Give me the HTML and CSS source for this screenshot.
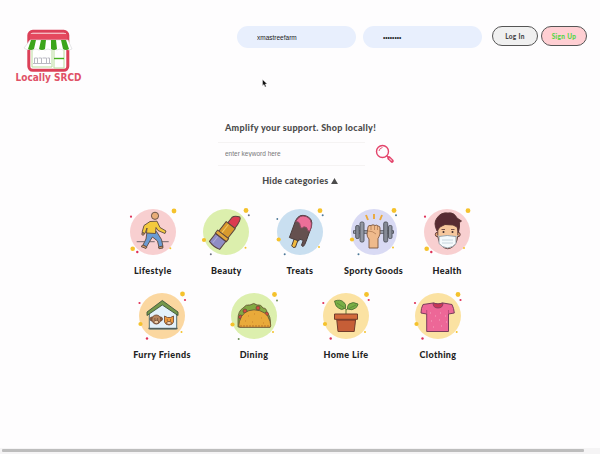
FILE: index.html
```html
<!DOCTYPE html>
<html lang="en">
<head>
<meta charset="utf-8">
<title>Locally SRCD</title>
<link rel="stylesheet" href="styles.css">
</head>
<body>
<header class="header">
  <svg class="logo" viewBox="12 28 74 62" role="img" aria-label="Locally SRCD">
    <rect x="28.8" y="31.3" width="39" height="39" rx="4" fill="#fff" stroke="#dc4058" stroke-width="3"/>
    <path d="M30 34h37v6H30z" fill="#e5485e"/>
    <path d="M31 33.500h35" stroke="#f6b9c0"/>
    <path d="M32 50v17h20V50M54 50v18h10V50" fill="#fff" stroke="#b9db9c"/>
    <path d="M54 58.5h10" stroke="#45b21e" stroke-width="1.4"/>
    <path d="M34.5 63v-5h3v5m1-5h3v5m1-5h4v5m1-5h2v5M33 63.5h18" fill="none" stroke="#b9b9c2"/>
    <path d="M30 40h38l4 9q-3 2-6 0-3 2-6 0-3 2-6 0-3 2-6 0-3 2-6 0-3 2-6 0-3 2-6 0-3 2-6-1z" fill="#fff" stroke="#dddddf" stroke-width=".7"/>
    <path d="M31 40h5l-2 9q-3 2-6 0zM41 40h5l-1 9q-3 2-6 0zM51 40h5l1 9q-3 2-6 0zM61 40h5l3 9q-3 2-6 0z" fill="#3ca51b"/>
    <text class="logo-text" x="15.5" y="80.5" textLength="66" lengthAdjust="spacingAndGlyphs">Locally SRCD</text>
  </svg>
  <form class="login">
    <input class="field" type="text" value="xmastreefarm" aria-label="Username">
    <input class="field" type="password" value="password" aria-label="Password">
    <button class="btn btn-login" type="button">Log In</button>
    <button class="btn btn-signup" type="button">Sign Up</button>
  </form>
</header>
<svg class="pointer" viewBox="0 0 6 9"><path d="M.5.5v6.2l1.5-1.2 1 2.6 1.2-.5L3.2 5h2z" fill="#111" stroke="#fff" stroke-width=".4"/></svg>

<main class="main">
  <section class="search">
    <h1 class="tagline">Amplify your support. Shop locally!</h1>
    <div class="search-row">
      <input class="keyword" type="text" placeholder="enter keyword here">
      <svg class="lens" viewBox="0 0 20 20" fill="none" stroke="#e3446b">
        <circle cx="7.5" cy="7.5" r="6" stroke-width="1.4"/><path d="M4 7q.5-3 3.5-3.5" stroke-width=".9"/>
        <path d="M11.8 11.8l2 2" stroke-width="1.4"/><path d="M14 14l3 3" stroke-width="3.6" stroke-linecap="round"/><path d="M14.3 14.3l2.4 2.4" stroke="#f9bccb" stroke-width="1.2"/>
      </svg>
    </div>
    <p class="toggle">Hide categories <svg class="tri" viewBox="0 0 8 7"><path d="M4 0l4 7H0z" fill="#4c4c4c"/></svg></p>
  </section>

  <section class="row">
    <figure class="cat">
      <svg class="icon" viewBox="0 0 60 60">
        <circle cx="30" cy="30" r="23" fill="#f8cfd0"/>
        <g fill="#f5c22c"><circle cx="51" cy="9" r="2.4"/><circle cx="9.7" cy="46.7" r="2.3"/><circle cx="47.3" cy="46.3" r="1"/></g>
        <g fill="#df3157"><circle cx="8" cy="14.7" r="1.1"/><circle cx="14.3" cy="50" r="1.2"/></g>
        <path d="M13.7 39.7h8m4 0h6m6 0h8" stroke="#77686d"/>
        <g stroke="#5c4a40" stroke-width=".9" stroke-linejoin="round">
          <path d="M24 30l-1 7-3 6 3.5 2 4-7 2-3 5 4 1.5 6.5 4-1-1.5-7-5-8z" fill="#6a9bd3"/>
          <path d="M20 43l4 2-1 1.5-5-2zM35.5 45l4-1 .5 2-4 .7z" fill="#d59c6c"/>
          <path d="M27 19.5l7-.3 3 6.3 6 3.5-1 2.5-7-3-2-3-.5 6-9-.5.5-5-2 5.5-3-1 2-7z" fill="#f3c93d"/>
          <circle cx="32" cy="13.8" r="3.6" fill="#e9ad78"/><circle cx="20" cy="32" r="1.2" fill="#e9ad78"/>
        </g>
      </svg>
      <figcaption class="label">Lifestyle</figcaption>
    </figure>
    <figure class="cat">
      <svg class="icon" viewBox="0 0 60 60">
        <circle cx="30" cy="30" r="23" fill="#dcefad"/>
        <g fill="#f5c22c"><circle cx="50" cy="8.5" r="2.4"/><circle cx="8" cy="38" r="2.1"/><circle cx="49.5" cy="45.7" r="1"/></g>
        <g fill="#6c7180"><circle cx="52.8" cy="13.3" r="1"/><circle cx="14.8" cy="52.3" r="1"/></g>
        <g transform="translate(29 30) rotate(38)" stroke="#59443f" stroke-linejoin="round">
          <path d="M-3.500-9v-7q1-3 6-5 3 1 3 12z" fill="#db3b50"/>
          <path d="M-5.5-9h11.500V4H-5.5z" fill="#d89a2d"/><path d="M-2-8V3" stroke="#f1c963"/>
          <path d="M-7 3H7v4H-7z" fill="#e2a73b"/>
          <path d="M-6.500 7H6.500v10q-6 2-13 0z" fill="#8f8dc4"/><path d="M-3 8v8" stroke="#b0add6"/>
        </g>
      </svg>
      <figcaption class="label">Beauty</figcaption>
    </figure>
    <figure class="cat">
      <svg class="icon" viewBox="0 0 60 60">
        <circle cx="30" cy="30" r="23" fill="#c9dff0"/>
        <g fill="#f5c22c"><circle cx="50" cy="8.7" r="2.4"/><circle cx="8.7" cy="37.5" r="2.1"/><circle cx="49" cy="45" r="1"/></g>
        <g fill="#4c7898"><circle cx="52.7" cy="13.3" r="1"/><circle cx="7.3" cy="17" r=".9"/><circle cx="14.7" cy="52.2" r="1"/></g>
        <g transform="translate(31 27) rotate(20)" stroke="#493c3c" stroke-width=".9">
          <path d="M-3 11h4v8q-2 2-4 0z" fill="#f0b93d"/>
          <path d="M-8 12V-6q1-8 8.500-8T9-6v16q0 8-3 5v-5H2v2z" fill="#65504f"/>
          <path d="M-7.5-5q1-8.500 8-8.500T9-5v4q-2 1-3-1T2-3q-2 4-4 0t-5.500-2z" fill="#ec6f98" stroke="#8b4860"/>
        </g>
      </svg>
      <figcaption class="label">Treats</figcaption>
    </figure>
    <figure class="cat">
      <svg class="icon" viewBox="0 0 60 60">
        <circle cx="30" cy="30" r="23" fill="#d9daf4"/>
        <g fill="#f5c22c"><circle cx="50" cy="8.5" r="2.4"/><circle cx="8" cy="37.5" r="2.1"/><circle cx="49" cy="45.5" r="1"/></g>
        <g fill="#4c7898"><circle cx="52" cy="13.3" r="1"/><circle cx="14.5" cy="52.2" r="1"/></g>
        <path d="M22 13l2 5M30 12v5M38 13l-2 5" stroke="#eba93c" stroke-width="1.900"/>
        <g stroke="#4d5059" stroke-width=".9">
          <path d="M9.500 28.700h40v2.600h-40z" fill="#a8acb8"/>
          <rect x="11.700" y="23.500" width="3.500" height="13" rx="1.300" fill="#858a96"/><rect x="16" y="20" width="4" height="20" rx="1.500" fill="#9297a3"/>
          <rect x="39.700" y="20" width="4" height="20" rx="1.500" fill="#858a96"/><rect x="44.500" y="23.500" width="3.500" height="13" rx="1.300" fill="#9297a3"/>
          <path d="M24 25q0-2 3-1.500 2-1.500 4 0 2-1 3 .5 2 0 2 2v6q-1 3-2 4.500V46h-9V37q-2-2-2-5z" fill="#efba8c" stroke="#79563f"/>
          <path d="M27 24v4M30.500 24v4M33.500 24v4M24 29q5 0 8 3" fill="none" stroke="#a9744d" stroke-width=".7"/>
        </g>
      </svg>
      <figcaption class="label">Sporty Goods</figcaption>
    </figure>
    <figure class="cat">
      <svg class="icon" viewBox="0 0 60 60">
        <circle cx="30" cy="30" r="23" fill="#f8cfd0"/>
        <g fill="#f5c22c"><circle cx="51" cy="8.700" r="2.400"/><circle cx="9.700" cy="46.700" r="2.300"/><circle cx="47" cy="46" r="1"/></g>
        <g fill="#df3157"><circle cx="8" cy="14.700" r="1.100"/><circle cx="14.300" cy="50" r="1.200"/></g>
        <g stroke="#583232" stroke-width=".9">
          <circle cx="20.500" cy="32.500" r="2.200" fill="#e9ab7a"/><circle cx="41" cy="32.500" r="2.200" fill="#e9ab7a"/>
          <path d="M20.800 22h20v12q-1 9-7 12-3 1.500-6 0-6-3-7-12z" fill="#f6c79c"/>
          <path d="M20 29q-4-8 0-13 4-6 11-5 6-1 9 5l4.500 3-2 1.500Q43 25 41.500 30l-1.500-5-4-2-8-.5-5 2.500z" fill="#572b32"/>
          <path d="M22 34.500q8-2 17 0v7q-3 4-8.500 4.500-5.500-.5-8.500-4.500z" fill="#f5fafc" stroke="#8d9ba5"/>
        </g>
        <path d="M20.500 33l2 2.500m18.500-2.500l-2 2.500M25 38h11m-11 3h11" stroke="#bbcbd5" stroke-width=".8"/>
        <path d="M24.500 27.500h3.500m6 0h3.500" stroke="#583232" stroke-width=".8"/><circle cx="26.500" cy="30" r="1" fill="#39292c"/><circle cx="35.500" cy="30" r="1" fill="#39292c"/>
      </svg>
      <figcaption class="label">Health</figcaption>
    </figure>
  </section>

  <section class="row">
    <figure class="cat">
      <svg class="icon" viewBox="0 0 60 60">
        <circle cx="30" cy="30" r="23" fill="#fbd7a0"/>
        <g fill="#f5c22c"><circle cx="50.500" cy="8" r="2.400"/><circle cx="8.500" cy="38" r="2.100"/><circle cx="49.500" cy="46" r="1"/></g>
        <g fill="#df3157"><circle cx="53" cy="14" r="1.100"/><circle cx="7.500" cy="17" r="1.100"/><circle cx="15" cy="52.500" r="1.200"/></g>
        <path d="M17.300 27l13-10 14.400 10v16H17.300z" fill="#e3f1fa" stroke="#536d70"/>
        <path d="M30.300 14.500L46 26v3.500L30.300 19 15 29.500V26z" fill="#75984b" stroke="#3e563c" stroke-width=".9"/>
        <path d="M16.500 42.500h29" stroke="#52605b" stroke-width="1.400"/>
        <g stroke="#694530" stroke-width=".8">
          <circle cx="20" cy="33" r="2" fill="#916044"/><circle cx="28.500" cy="33" r="2" fill="#916044"/><circle cx="24.300" cy="33.500" r="4.500" fill="#b5845d"/><ellipse cx="24.300" cy="36" rx="2.500" ry="1.700" fill="#edcda8"/>
          <path d="M32.500 30l3 1.500h3l3-1.500v6q-1 3-4.500 3t-4.500-3z" fill="#ee9b3e"/><ellipse cx="37" cy="37" rx="2.500" ry="1.500" fill="#f8dec2"/>
        </g>
        <path d="M22.500 33h.8m2 0h.8m8.700 1h.8m2.500 0h.8" stroke="#302620"/>
      </svg>
      <figcaption class="label">Furry Friends</figcaption>
    </figure>
    <figure class="cat">
      <svg class="icon" viewBox="0 0 60 60">
        <circle cx="30" cy="30" r="23" fill="#dcefad"/>
        <g fill="#f5c22c"><circle cx="50.500" cy="8.500" r="2.400"/><circle cx="8.500" cy="38.500" r="2.100"/><circle cx="49" cy="46" r="1"/></g>
        <g fill="#6d8f58"><circle cx="53" cy="14.500" r="1"/><circle cx="14.700" cy="53" r="1"/></g>
        <g stroke="#665033" stroke-width=".8">
          <path d="M14 41V33q0-8 5-11 3-4 7-3 4-3 7 0 4-1 6 3 4 0 4 5 4 2 3.500 14z" fill="#81a943"/>
          <g fill="#d6483f"><circle cx="16.500" cy="31" r="2"/><circle cx="21" cy="25" r="2"/><circle cx="34" cy="22" r="2"/><circle cx="42.500" cy="28" r="2"/></g>
          <path d="M15.500 41.300q-1.500-1 0-6 3-11 14.500-11.500 13 .5 16 11.500 1.500 5 0 6z" fill="#e9aa3a"/>
        </g>
        <path d="M16 40h29" stroke="#bb7126" stroke-dasharray="2 1"/><path d="M24 30h1m5-2h1m6 4h1m-10 4h1m-8-1h1m17 2h1" stroke="#c9812a"/>
      </svg>
      <figcaption class="label">Dining</figcaption>
    </figure>
    <figure class="cat">
      <svg class="icon" viewBox="0 0 60 60">
        <circle cx="30" cy="30" r="23" fill="#fbe2a2"/>
        <g fill="#f5c22c"><circle cx="50.500" cy="8.500" r="2.400"/><circle cx="9" cy="38" r="2.100"/><circle cx="49" cy="46" r="1"/></g>
        <g fill="#df3157"><circle cx="52.700" cy="14" r="1.100"/><circle cx="7.300" cy="17" r="1.100"/><circle cx="14.700" cy="52.500" r="1.200"/></g>
        <path d="M30 28v-5l-4-3m4 4l4-3" fill="none" stroke="#617c35"/>
        <path d="M18.500 15q6-2 9 1 3 2 2 6-4 3-7 0-3-1-4-7zM42 18q-5-3-9 0-2 2-1.500 5 5 2 8-1 2-1 2.500-4z" fill="#78ae45" stroke="#456831" stroke-width=".8"/><path d="M21 17l7 4.500M40 19l-7 3.500" stroke="#4d7934" stroke-width=".6"/>
        <path d="M20.700 33h19l-1.500 12.500H22z" fill="#c65e37" stroke="#713c2c"/><path d="M18.500 28h23v5.300h-23z" fill="#d36a3c" stroke="#713c2c"/><path d="M21 34.500h18" stroke="#98442c"/>
      </svg>
      <figcaption class="label">Home Life</figcaption>
    </figure>
    <figure class="cat">
      <svg class="icon" viewBox="0 0 60 60">
        <circle cx="30" cy="30" r="23" fill="#fbe2a2"/>
        <g fill="#f5c22c"><circle cx="50" cy="8.500" r="2.400"/><circle cx="8.500" cy="38" r="2.100"/><circle cx="48.700" cy="46" r="1"/></g>
        <g fill="#df3157"><circle cx="52.500" cy="14" r="1.100"/><circle cx="7" cy="17" r="1.100"/><circle cx="14.500" cy="52.500" r="1.200"/></g>
        <path d="M25 17q5 2 10 0l9 1.500q2 4 2.300 8.500l-5.800 1V45.500H18.700V28L13 27q0-5 2-8.500z" fill="#ed6797" stroke="#783e5c" stroke-linejoin="round"/>
        <path d="M25 17q0 5 5 5t5-5q-5 2-10 0z" fill="#c83658" stroke="#783e5c" stroke-width=".8"/>
        <path d="M18.700 28v-4m21.800 4v-4" stroke="#a7436d" stroke-width=".7"/><path d="M22 27h1m4 3h1m4-3h1m4 3h1m-15 5h1m7-1h1m6 2h1m-14 5h1m7-1h1" stroke="#f6abc4" stroke-width=".9"/>
      </svg>
      <figcaption class="label">Clothing</figcaption>
    </figure>
  </section>
</main>
<footer class="track"><div class="thumb"></div></footer>
</body>
</html>
```
FILE: styles.css
```css
* { box-sizing: border-box; }
body {
  margin: 0;
  height: 454px;
  display: flex;
  flex-direction: column;
  overflow: hidden;
  background: #fefdfe;
  font-family: Lato, "Liberation Sans", sans-serif;
  color: #222;
}
.header {
  height: 118px;
  padding: 26px 13px 0 12px;
  display: flex;
  justify-content: space-between;
  align-items: flex-start;
}
.logo { width: 74px; height: 62px; margin-top: 2px; overflow: visible; }
.logo-text {
  font: 700 10px "DejaVu Sans", sans-serif;
  fill: #e05267;
}
.login { display: flex; align-items: flex-start; }
.field {
  width: 119px;
  height: 22px;
  margin-right: 7px;
  padding: 0 20px;
  border: 0;
  border-radius: 11px;
  background: #e8effd;
  font: 6.5px "Liberation Sans", sans-serif;
  color: #222;
}
.field + .field { margin-right: 10px; }
.btn {
  width: 46px;
  height: 20px;
  padding: 0;
  border: 1.5px solid #555;
  border-radius: 10px;
  font: 900 6.5px Lato, sans-serif;
  letter-spacing: .3px;
}
.btn-login { margin-right: 3px; background: #f0f0f0; color: #444; }
.btn-signup { background: #ffcfd3; color: #55d646; }
.pointer { position: absolute; left: 262px; top: 79px; width: 6px; height: 9px; }
.main { flex: 1; width: 368px; margin: 0 auto; }
.search { height: 84px; }
.tagline {
  margin: 0 0 0 109px;
  padding-top: 3px;
  font-size: 9px;
  line-height: 14px;
  font-weight: 900;
  letter-spacing: .31px;
  color: #4c4c4c;
  white-space: nowrap;
}
.search-row {
  display: flex;
  align-items: center;
  margin: 7px 0 0 102px;
}
.keyword {
  width: 147px;
  height: 24px;
  padding: 0 7px 1px;
  border: 1px solid #f5f3f3;
  border-width: 1px 0;
  background: transparent;
  font: 6.5px "Liberation Sans", sans-serif;
}
.keyword::placeholder { color: #777; opacity: 1; }
.lens { width: 20px; height: 20px; margin-left: 10px; }
.toggle {
  margin: 8px 0 0;
  text-align: center;
  font-size: 9px;
  line-height: 14px;
  font-weight: 900;
  letter-spacing: .22px;
  color: #4c4c4c;
}
.tri { width: 7px; height: 6px; }
.row { display: flex; height: 84px; }
.cat {
  flex: 1;
  margin: 0;
  display: flex;
  flex-direction: column;
  align-items: center;
}
.icon { width: 60px; height: 60px; }
.label {
  margin-top: 2px;
  font-size: 9px;
  line-height: 14px;
  font-weight: 900;
  letter-spacing: .36px;
  white-space: nowrap;
}
.track { height: 6px; padding: 1px 0 0 2px; background: #f5f4f5; }
.thumb { width: 582px; height: 3px; border-radius: 1px; background: #bdbdbd; }
```
